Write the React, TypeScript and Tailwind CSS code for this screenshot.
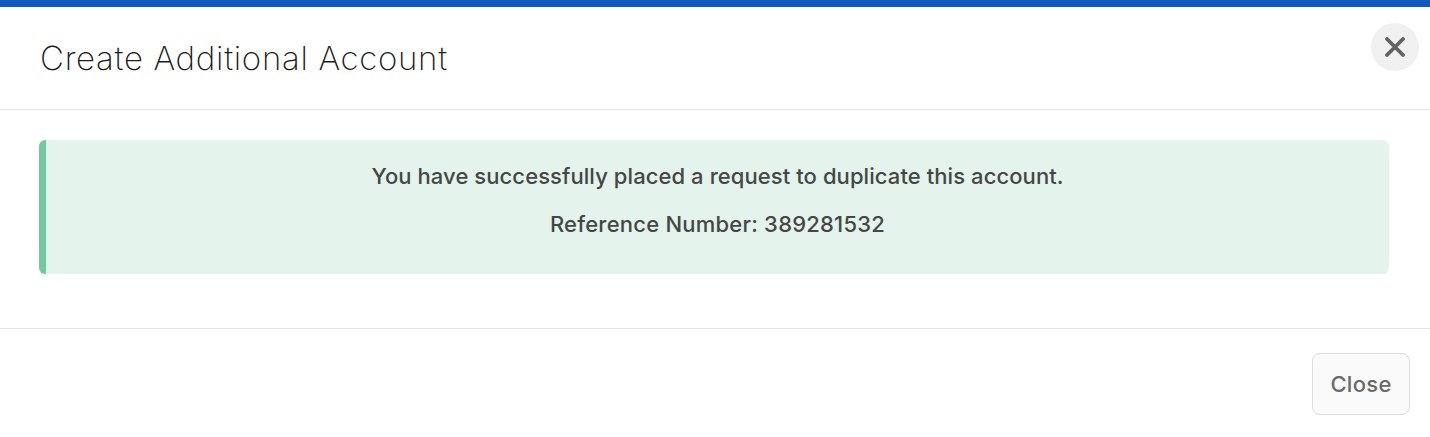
import React from 'react';

const App: React.FC = () => {
  return (
    <div className="relative h-[437px] w-[1430px] overflow-hidden bg-white font-['Inter','Liberation_Sans',sans-serif]">
      {/* Header */}
      <div className="h-[110px] border-t-[7px] border-b border-t-[#1358bf] border-b-[#e3e3e3] pl-[40px] pt-[31px]">
        <h2 className="text-[33px] leading-[40px] font-[250] tracking-[0.7px] text-[#1c1c1c]">Create Additional Account</h2>
      </div>
      <button className="absolute right-[11px] top-[23px] flex h-[48px] w-[48px] items-center justify-center rounded-full bg-[#f0f0f0]">
        <svg width="20" height="20" viewBox="0 0 20 20" fill="none" stroke="#636363" strokeWidth="3.8" strokeLinecap="round">
          <path d="M2 2L18 18M18 2L2 18" />
        </svg>
      </button>

      {/* Body */}
      <div className="h-[219px] border-b border-[#e3e3e3] pl-[39px] pr-[41px] pt-[30px]">
        <div className="flex h-[134px] flex-col items-center rounded-[6px] border-l-[7px] border-[#71cb9c] bg-[#e4f3ec] pt-[20px] text-[22px] leading-[32px] font-medium text-[#454745]">
          <p className="tracking-[0.08px]">You have successfully placed a request to duplicate this account.</p>
          <p className="mt-[16px] tracking-[0.22px]">Reference Number: 389281532</p>
        </div>
      </div>

      {/* Footer */}
      <div className="flex justify-end pr-[20px] pt-[24px]">
        <button className="h-[62px] w-[98px] rounded-[8px] border border-[#dddddd] bg-[#fafafa] text-[22px] tracking-[0.3px] font-medium text-[#696969]">Close</button>
      </div>
    </div>
  );
};

export default App;
